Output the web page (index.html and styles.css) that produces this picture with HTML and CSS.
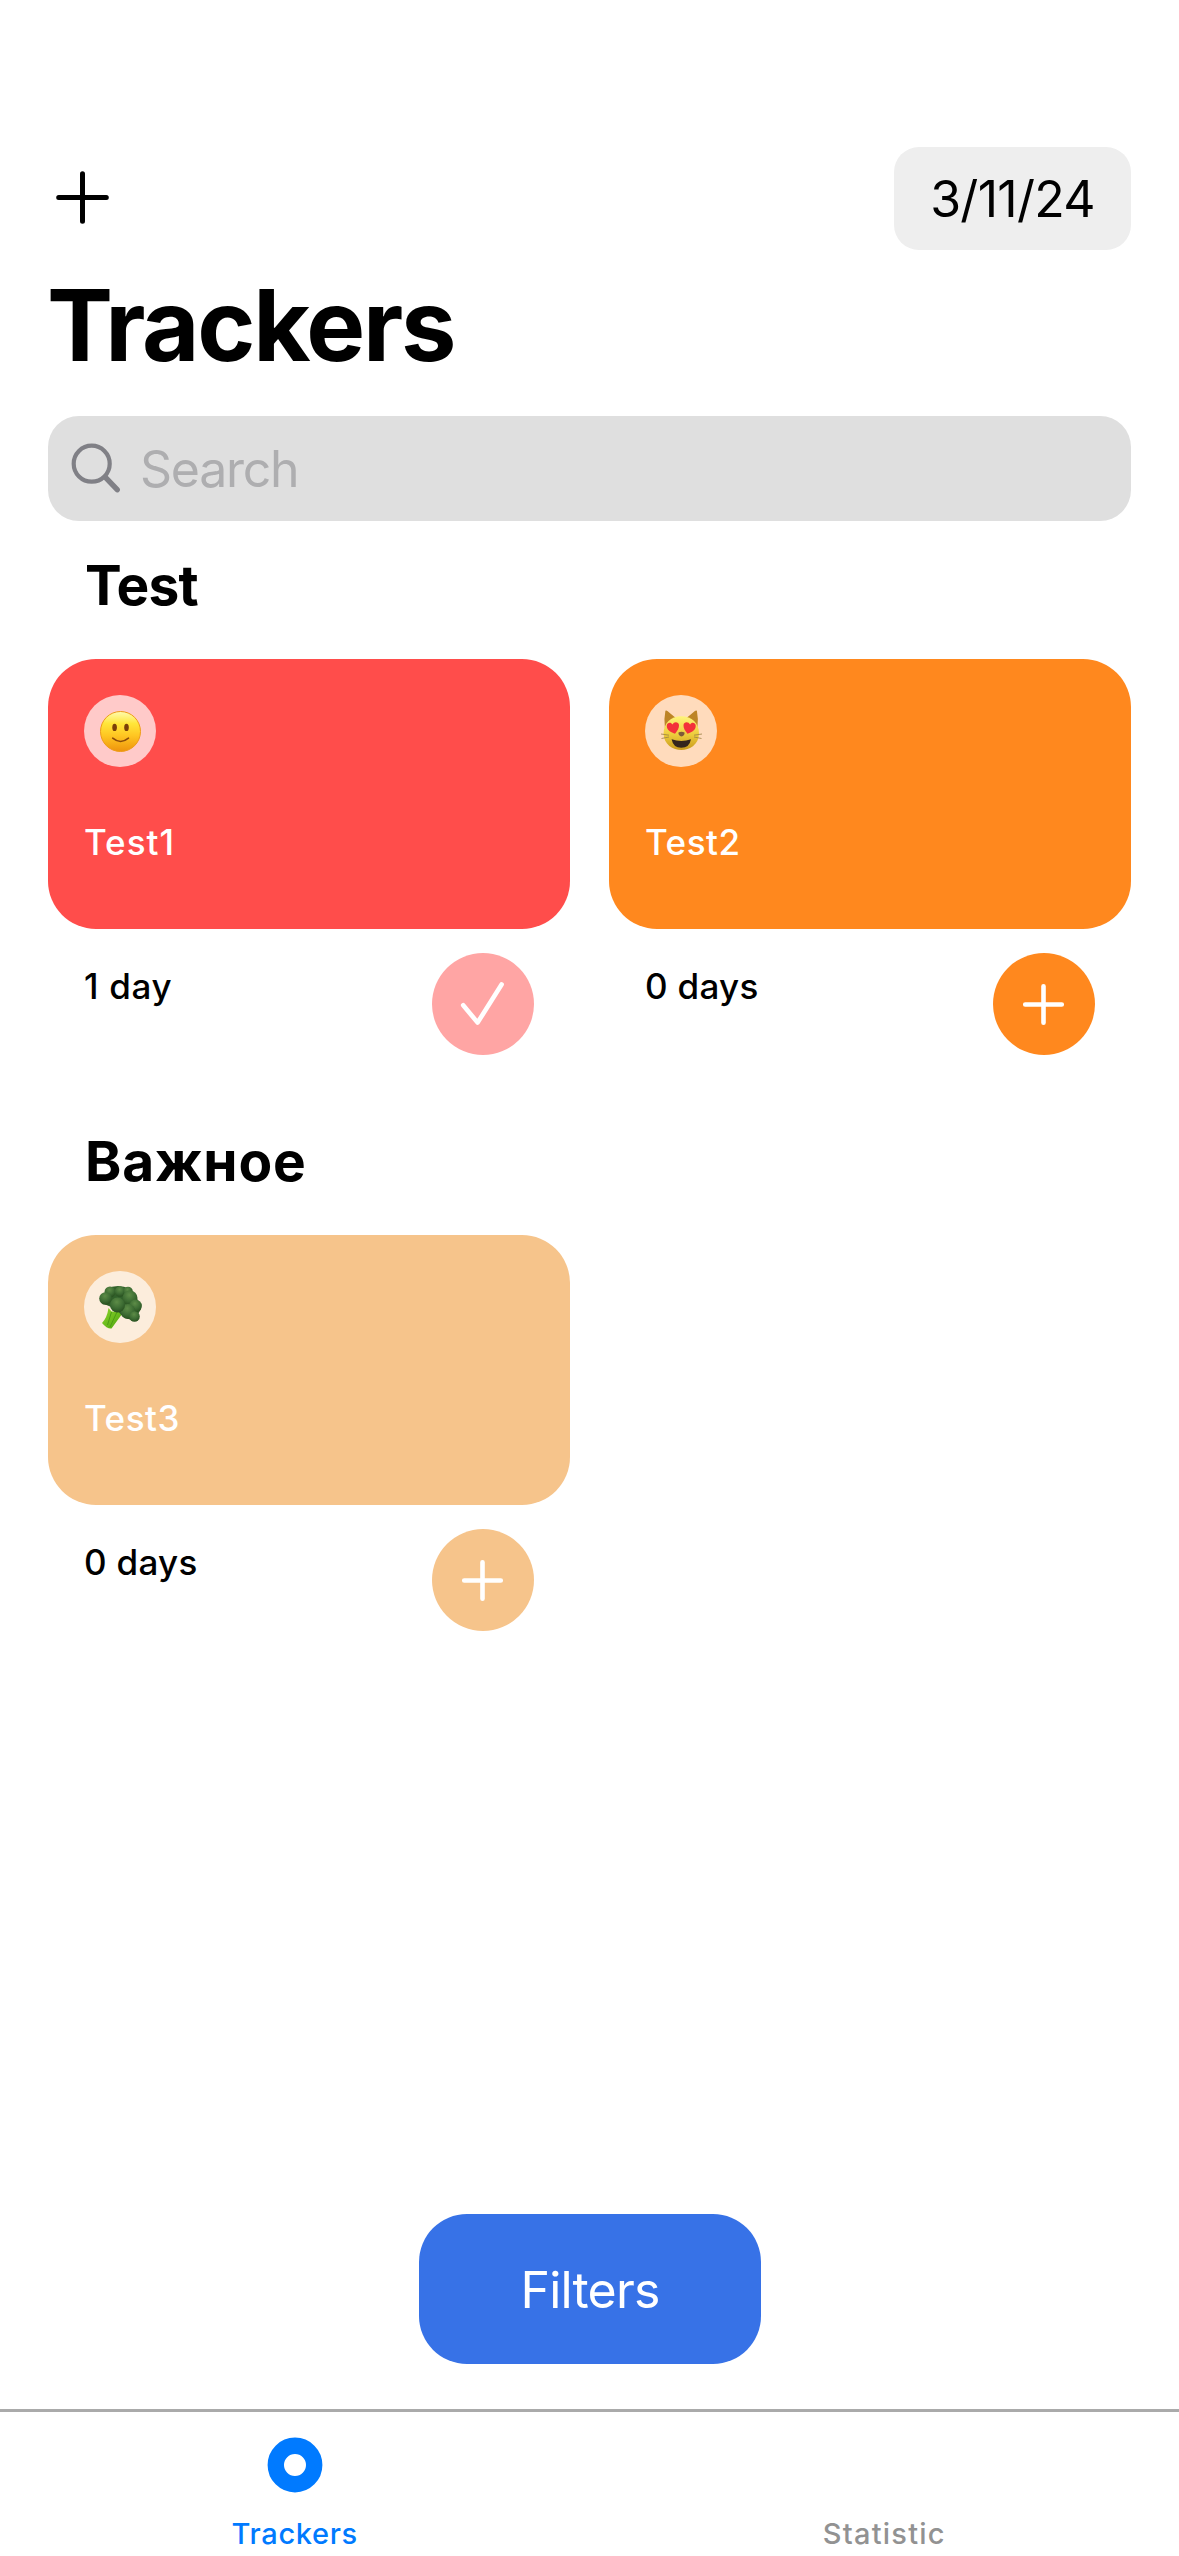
FILE: index.html
```html
<!DOCTYPE html>
<html lang="en">
<head>
<meta charset="utf-8">
<title>Trackers</title>
<link rel="stylesheet" href="styles.css">
</head>
<body>
<main class="screen">
  <header class="topbar">
    <svg class="add" viewBox="0 0 53 53" role="img" aria-label="Add tracker"><path d="M26.5 2.7v47.6M2.7 26.5h47.6"/></svg>
    <div class="date">3/11/24</div>
  </header>
  <h1 class="title">Trackers</h1>
  <div class="search">
    <svg class="search-icon" viewBox="0 0 50 50" aria-hidden="true"><circle cx="20.7" cy="20.7" r="18"/><path class="handle" d="M34.2 34.2L46.2 46.7"/></svg>
    <span class="search-text">Search</span>
  </div>

  <section class="category">
    <h2 class="category-name latin">Test</h2>
    <div class="grid">
      <article class="tracker red">
        <div class="card">
          <div class="emoji">
            <svg viewBox="0 0 72 72" role="img" aria-label="Slightly smiling face">
              <defs>
                <linearGradient id="face" x1="0" y1="0" x2="0" y2="1"><stop offset="0" stop-color="#fffbb0"/><stop offset=".3" stop-color="#ffe63a"/><stop offset=".6" stop-color="#ffc622"/><stop offset="1" stop-color="#ee930c"/></linearGradient>
              </defs>
              <circle cx="36.5" cy="36.5" r="20" fill="url(#face)" stroke="#ee9c18" stroke-width="1"/>
              <ellipse cx="30.6" cy="32.4" rx="2.3" ry="3.6" fill="#7a3f08"/>
              <ellipse cx="42.5" cy="32.4" rx="2.3" ry="3.6" fill="#7a3f08"/>
              <path d="M28.7 43.2q7.8 6.6 15.8 0" fill="none" stroke="#8a4a0a" stroke-width="1.6" stroke-linecap="round"/>
            </svg>
          </div>
          <div class="name one">Test1</div>
        </div>
        <div class="meta">
          <span class="days single">1 day</span>
          <span class="action done"><svg viewBox="0 0 102 102" role="img" aria-label="Done"><path d="M31.2 52.2L45.6 69.6L69.6 31.5"/></svg></span>
        </div>
      </article>
      <article class="tracker orange">
        <div class="card">
          <div class="emoji">
            <svg viewBox="0 0 72 72" role="img" aria-label="Cat with heart eyes">
              <defs>
                <linearGradient id="cat" x1="0" y1="0" x2="0" y2="1"><stop offset="0" stop-color="#fff47a"/><stop offset=".55" stop-color="#eccb3b"/><stop offset="1" stop-color="#c99a1c"/></linearGradient>
              </defs>
              <path d="M20.4 15.8q1-.6 2 .2l9 7.5-11.500 9.500q-1.200-9 .5-17.200zM51.900 15.800q-1-.6-2 .2l-9 7.500 11.500 9.500q1.200-9-.5-17.200z" fill="#bd8426"/>
              <path d="M36.300 21.300c10.500 0 17.700 7.200 17.700 17.200 0 11-9.500 16.500-17.700 16.500s-17.700-5.500-17.700-16.500c0-10 7.200-17.200 17.700-17.200z" fill="url(#cat)"/>
              <path d="M16 39l8 1.200M16.500 43.500l7.500-1.500M57 39l-8 1.200M56.500 43.500l-7.500-1.500" stroke="#9a8044" stroke-width=".8"/>
              <path id="heart" d="M30 38.700c-5-1.600-8.500-4.300-8.200-8.200.3-3 4.200-3.700 5.600-.9 1.500-3.500 6.200-3.200 6.600.4.200 3-1.500 6-4 8.700z" fill="#f3313a"/>
              <path d="M42.500 38.700c5-1.600 8.500-4.300 8.200-8.200-.3-3-4.200-3.700-5.600-.9-1.500-3.500-6.200-3.200-6.600.4-.2 3 1.500 6 4 8.700z" fill="#f3313a"/>
              <path d="M33.500 37.500q3-1.500 6 0 .4 3.200-3 4-3.400-.8-3-4z" fill="#7f5a3a"/>
              <path d="M26.600 44.200q9.700 3.600 19.400 0-1.600 8.600-9.700 8.600t-9.700-8.600z" fill="#35251d"/>
            </svg>
          </div>
          <div class="name">Test2</div>
        </div>
        <div class="meta">
          <span class="days">0 days</span>
          <span class="action"><svg viewBox="0 0 102 102" role="img" aria-label="Mark done"><path d="M50.500 33.200v36.600M32.200 51.500h36.600"/></svg></span>
        </div>
      </article>
    </div>
  </section>

  <section class="category">
    <h2 class="category-name cyrillic">Важное</h2>
    <div class="grid">
      <article class="tracker sand">
        <div class="card">
          <div class="emoji">
            <svg viewBox="0 0 72 72" role="img" aria-label="Broccoli">
              <defs>
                <radialGradient id="bud" cx=".45" cy=".3" r=".7"><stop offset="0" stop-color="#5d8c47"/><stop offset=".6" stop-color="#3d6c33"/><stop offset="1" stop-color="#28501f"/></radialGradient>
                <linearGradient id="stem" x1="0" y1="0" x2="1" y2="1"><stop offset="0" stop-color="#8ed62c"/><stop offset="1" stop-color="#48a00c"/></linearGradient>
              </defs>
              <path d="M24.500 37l3 3.500L37 41l4-2-13.500 18.500q-4.500.5-9.500-5.500 5-5 6.500-15z" fill="url(#stem)"/>
              <path d="M27.500 41l-4 13M33 41l-7 15" stroke="#4c9c14" stroke-width="1" fill="none"/>
              <path d="M22 18Q34 12 46 18q8 8 11 20l-7 12-11-4-7-8-12-5z" fill="#31602a"/>
              <g fill="url(#bud)">
                <circle cx="26" cy="21" r="5.500"/><circle cx="36" cy="20.500" r="5.200"/><circle cx="44" cy="20.500" r="4.800"/>
                <circle cx="21.500" cy="27.500" r="6.300"/><circle cx="46" cy="27" r="7.500"/><circle cx="51.500" cy="35" r="6.400"/>
                <circle cx="44" cy="40.500" r="7.500"/><circle cx="50.500" cy="45.500" r="5.300"/><circle cx="33.500" cy="34" r="7.500"/>
              </g>
            </svg>
          </div>
          <div class="name">Test3</div>
        </div>
        <div class="meta">
          <span class="days">0 days</span>
          <span class="action"><svg viewBox="0 0 102 102" role="img" aria-label="Mark done"><path d="M50.500 33.200v36.600M32.200 51.500h36.600"/></svg></span>
        </div>
      </article>
    </div>
  </section>

  <div class="filters">Filters</div>
</main>
<nav class="tabs">
  <div class="tab active">
    <svg class="tab-icon" viewBox="0 0 56 56" aria-hidden="true"><circle cx="28" cy="28" r="19.200"/></svg>
    <span class="tab-label">Trackers</span>
  </div>
  <div class="tab">
    <span class="tab-icon"></span>
    <span class="tab-label wide">Statistic</span>
  </div>
</nav>
</body>
</html>
```
FILE: styles.css
```css
* { box-sizing: border-box; }

body {
  margin: 0;
  height: 2556px;
  display: flex;
  flex-direction: column;
  background: #fff;
  color: #000;
  font-family: "Inter", "Liberation Sans", sans-serif;
}

.screen {
  flex: 1;
  display: flex;
  flex-direction: column;
  padding: 147px 48px 45px;
}

.topbar {
  display: flex;
  justify-content: space-between;
  align-items: center;
  height: 103px;
  padding-left: 7.5px;
}
.add {
  width: 53px;
  height: 53px;
  margin-bottom: 2px;
  fill: none;
  stroke: #000;
  stroke-width: 5;
  stroke-linecap: round;
}
.date {
  width: 237px;
  height: 103px;
  border-radius: 25px;
  background: #eee;
  font-size: 50px;
  line-height: 104px;
  letter-spacing: -0.72px;
  text-align: center;
}

.title {
  margin: 15px 0 31px -1px;
  font-size: 99px;
  line-height: 120px;
  font-weight: 700;
  letter-spacing: -2.24px;
}

.search {
  display: flex;
  align-items: center;
  height: 105px;
  padding-left: 23px;
  border-radius: 31px;
  background: #dfdfdf;
}
.search-icon {
  width: 50px;
  height: 50px;
  margin-bottom: 2px;
  fill: none;
  stroke: #808086;
  stroke-width: 4.2;
}
.handle { stroke-width: 5.4; stroke-linecap: round; }
.search-text {
  margin-left: 19px;
  font-size: 50px;
  letter-spacing: -1.27px;
  color: #aeaeb0;
}

.category { height: 576px; padding-top: 31px; }
.category-name {
  margin: 0 0 41px 37px;
  font-size: 55px;
  line-height: 66px;
  font-weight: 700;
}
.latin { letter-spacing: -0.83px; }
.cyrillic { letter-spacing: 0.83px; }

.grid {
  display: grid;
  grid-template-columns: 522px 522px;
  justify-content: space-between;
}
.red { --tint: #ff4d4b; }
.orange { --tint: #ff881e; }
.sand { --tint: #f6c48b; }

.card {
  height: 270px;
  padding: 36px;
  border-radius: 48px;
  background: var(--tint);
}
.emoji {
  width: 72px;
  height: 72px;
  border-radius: 50%;
  background: rgba(255, 255, 255, 0.7);
}
.emoji svg { display: block; width: 72px; height: 72px; }
.name {
  margin-top: 54px;
  color: #fff;
  font-size: 35px;
  line-height: 42px;
  font-weight: 500;
  letter-spacing: 0.5px;
}
.one { letter-spacing: 1px; }

.meta {
  display: flex;
  justify-content: space-between;
  padding: 24px 36px 0;
}
.days {
  padding-top: 12px;
  font-size: 35px;
  line-height: 42px;
  font-weight: 500;
  letter-spacing: 0.3px;
}
.single { letter-spacing: 0.67px; }
.action {
  width: 102px;
  height: 102px;
  border-radius: 50%;
  background: var(--tint);
}
.action svg {
  display: block;
  fill: none;
  stroke: #fff;
  stroke-width: 4.6;
  stroke-linecap: round;
  stroke-linejoin: round;
}
.done { background: #ffa5a4; }

.filters {
  width: 342px;
  height: 150px;
  margin: auto auto 0 371px;
  border-radius: 48px;
  background: #3772e7;
  color: #fff;
  font-size: 50px;
  line-height: 152px;
  letter-spacing: -0.8px;
  text-align: center;
}

.tabs {
  display: flex;
  height: 147px;
  border-top: 3px solid #aaa;
}
.tab {
  flex: 1;
  display: flex;
  flex-direction: column;
  align-items: center;
  padding-top: 25px;
  color: #929292;
}
.active { color: #007aff; }
.tab-icon {
  width: 56px;
  height: 56px;
  fill: none;
  stroke: currentColor;
  stroke-width: 16.400;
}
.tab-label {
  margin-top: 23px;
  font-size: 29px;
  line-height: 36px;
  font-weight: 500;
  letter-spacing: 0.66px;
}
.wide { letter-spacing: 1.23px; }
```
